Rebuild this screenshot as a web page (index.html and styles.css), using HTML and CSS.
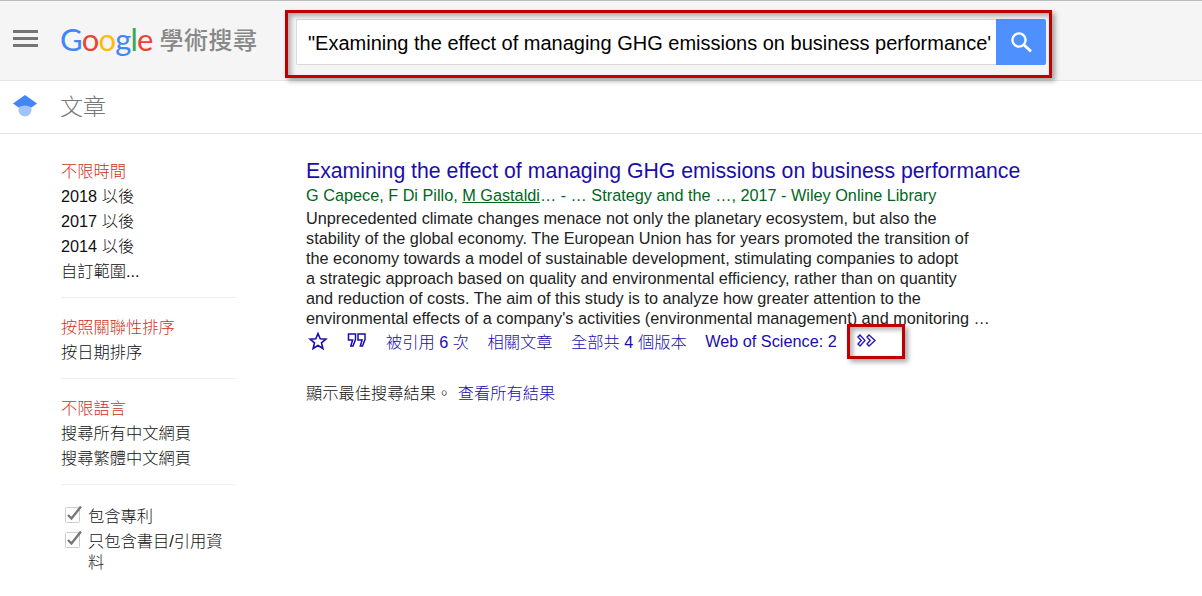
FILE: index.html
```html
<!DOCTYPE html>
<html lang="zh-Hant">

<head>
    <meta charset="UTF-8">
    <meta name="viewport" content="width=device-width, initial-scale=1.0">
    <title>Google 學術搜尋</title>
    <link rel="stylesheet" href="styles.css">
</head>

<body>
    <header class="top-bar">
        <div class="menu-icon"><span></span><span></span><span></span></div>
        <div class="logo">
            <span class="logo-google"><span class="g-blue">G</span><span class="g-red">o</span><span class="g-yellow">o</span><span class="g-blue">g</span><span class="g-green">l</span><span class="g-red">e</span></span>
            <span class="logo-text">學術搜尋</span>
        </div>
        <form class="search-form">
            <div class="search-input">"Examining the effect of managing GHG emissions on business performance'</div>
            <div class="search-button">
                <svg width="24" height="24" viewBox="0 0 24 24" fill="none" stroke="#fff">
                    <circle cx="10" cy="10" r="6.6" stroke-width="2.3"></circle>
                    <path d="M15 15l7 6.4" stroke-width="2.8"></path>
                </svg>
            </div>
        </form>
    </header>

    <div class="sub-bar">
        <svg class="cap-icon" width="26" height="24" viewBox="0 0 26 24">
            <circle cx="13" cy="16" r="6.5" fill="#a1c2fa"></circle>
            <path d="M13 1L25 9.5 19.5 13.5Q13 9.5 6.5 13.5L1 9.5Z" fill="#4285f4"></path>
        </svg>
        <span class="sub-title">文章</span>
    </div>

    <div class="content">
        <aside class="sidebar">
            <ul class="side-list">
                <li class="active">不限時間</li>
                <li>2018 以後</li>
                <li>2017 以後</li>
                <li>2014 以後</li>
                <li>自訂範圍...</li>
            </ul>
            <ul class="side-list">
                <li class="active">按照關聯性排序</li>
                <li>按日期排序</li>
            </ul>
            <ul class="side-list">
                <li class="active">不限語言</li>
                <li>搜尋所有中文網頁</li>
                <li>搜尋繁體中文網頁</li>
            </ul>
            <ul class="side-list checks">
                <li>
                    <svg class="check" width="19" height="20" viewBox="0 0 19 20">
                        <rect x="1.500" y="3.500" width="14" height="15" rx="1" fill="#fff" stroke="#ccc"></rect>
                        <path d="M4 11l3.500 3.500L17 2.500" fill="none" stroke="#777" stroke-width="2.400"></path>
                    </svg>
                    <span>包含專利</span>
                </li>
                <li>
                    <svg class="check" width="19" height="20" viewBox="0 0 19 20">
                        <rect x="1.500" y="3.500" width="14" height="15" rx="1" fill="#fff" stroke="#ccc"></rect>
                        <path d="M4 11l3.500 3.500L17 2.500" fill="none" stroke="#777" stroke-width="2.400"></path>
                    </svg>
                    <span>只包含書目/引用資料</span>
                </li>
            </ul>
        </aside>

        <main class="results">
            <h3 class="result-title"><a href="#">Examining the effect of managing GHG emissions on business performance</a></h3>
            <div class="result-meta">G Capece, F Di Pillo, <u>M Gastaldi</u>… - … Strategy and the …, 2017 - Wiley Online Library</div>
            <div class="result-snippet">Unprecedented climate changes menace not only the planetary ecosystem, but also the<br>stability of the global economy. The European Union has for years promoted the transition of<br>the economy towards a model of sustainable development, stimulating companies to adopt<br>a strategic approach based on quality and environmental efficiency, rather than on quantity<br>and reduction of costs. The aim of this study is to analyze how greater attention to the<br>environmental effects of a company's activities (environmental management) and monitoring …</div>
            <div class="result-links">
                <svg class="star" width="20" height="20" viewBox="0 0 20 20">
                    <path d="M10 2.500l2.200 5.300 5.700.4-4.400 3.700 1.400 5.600L10 14.500l-4.900 3 1.400-5.600-4.400-3.700 5.700-.4z" fill="none" stroke="#1a0dab" stroke-width="1.600"></path>
                </svg>
                <svg class="quote" width="20" height="20" viewBox="0 0 20 20">
                    <path d="M1.500 3h7v5.500L6 15H3.800l1.800-6H1.500zM11 3h7v5.500L15.500 15h-2.200l1.800-6H11z" fill="none" stroke="#1a0dab" stroke-width="1.500"></path>
                </svg>
                <a href="#">被引用 6 次</a>
                <a href="#">相關文章</a>
                <a href="#">全部共 4 個版本</a>
                <a href="#">Web of Science: 2</a>
                <svg class="more" width="20" height="14" viewBox="0 0 20 14">
                    <path d="M1 3L3 1 8 6.500 3 12 1 10 4.200 6.500ZM10 3L12 1 18 6.500 12 12 10 10 13.200 6.500Z" fill="none" stroke="#2a1db5" stroke-width="1.400"></path>
                </svg>
            </div>
            <p class="best-results">顯示最佳搜尋結果。 <a href="#">查看所有結果</a></p>
        </main>
    </div>

    <div class="mark mark-search"></div>
    <div class="mark mark-more"></div>
</body>

</html>
```

FILE: styles.css
```css
body {
    margin: 0;
    background-color: #fff;
    color: #222;
    font-family: 'Liberation Sans', Arial, 'Noto Sans CJK TC', sans-serif;
    font-size: 16.25px;
    font-weight: 300;
    position: relative;
    height: 596px;
    overflow: hidden;
}

a {
    color: #1a0dab;
    text-decoration: none;
}

/* top bar */
.top-bar {
    display: flex;
    align-items: center;
    box-sizing: border-box;
    height: 81px;
    background-color: #f5f5f5;
    border-top: 1px solid #bbb;
    border-bottom: 1px solid #e5e5e5;
}

.menu-icon {
    display: flex;
    flex-direction: column;
    gap: 4px;
    width: 25px;
    margin-left: 13px;
    margin-top: -4px;
}

.menu-icon span {
    display: block;
    height: 3px;
    background-color: #757575;
}

.logo {
    display: flex;
    align-items: center;
    margin-left: 22px;
    margin-top: -4px;
    width: 236px;
}

.logo-google {
    font-family: 'Lato', sans-serif;
    font-size: 31px;
    font-weight: 400;
    letter-spacing: -0.8px;
}

.g-blue { color: #4285f4; }
.g-red { color: #ea4335; }
.g-yellow { color: #fbbc05; }
.g-green { color: #34a853; }

.logo-text {
    margin-left: 7px;
    font-size: 24px;
    font-weight: 500;
    color: #888;
    letter-spacing: 0.5px;
}

.search-form {
    display: flex;
    height: 46px;
    width: 750px;
    margin-top: 3px;
}

.search-input {
    flex: 1;
    box-sizing: border-box;
    padding: 12px 0 0 11px;
    background-color: #fff;
    border: 1px solid #d9d9d9;
    border-right: 0;
    border-radius: 2px 0 0 2px;
    color: #000;
    font-size: 20px;
    font-weight: 400;
    white-space: nowrap;
}

.search-button {
    display: flex;
    align-items: center;
    justify-content: center;
    width: 50px;
    background-color: #4d90fe;
    border-radius: 0 2px 2px 0;
}

/* sub bar */
.sub-bar {
    display: flex;
    align-items: center;
    box-sizing: border-box;
    height: 53px;
    border-bottom: 1px solid #e5e5e5;
}

.cap-icon {
    margin-left: 12px;
    margin-top: -3px;
}

.sub-title {
    margin-left: 22px;
    margin-top: -4px;
    font-size: 23px;
    color: #777;
}

/* page */
.content {
    display: flex;
}

.sidebar {
    width: 175px;
    margin-left: 61px;
    padding-top: 25px;
    flex-shrink: 0;
}

.side-list {
    list-style: none;
    margin: 0 0 17px;
    padding: 0 0 13px;
    border-bottom: 1px solid #eee;
    line-height: 25px;
    color: #111;
}

.side-list .active {
    color: #cc3322;
}

.side-list.checks {
    border-bottom: 0;
    padding-top: 4px;
}

.checks li {
    display: flex;
    align-items: flex-start;
    line-height: 21px;
    margin-bottom: 4px;
}

.check {
    margin: -2px 5px 0 3px;
    flex-shrink: 0;
}

.results {
    margin-left: 70px;
    padding-top: 25px;
    width: 800px;
}

.result-title {
    margin: 0;
    font-size: 21.25px;
    font-weight: normal;
    line-height: 25px;
}

.result-meta {
    line-height: 22px;
    color: #006621;
}

.result-snippet {
    margin-top: 2px;
    line-height: 20px;
    white-space: nowrap;
}

.result-links {
    display: flex;
    align-items: center;
    height: 22px;
    margin-top: 2px;
}

.result-links a {
    margin-right: 18.5px;
}

.star {
    margin: 0 19px 0 2px;
}

.quote {
    margin-right: 19px;
}

.more {
    margin-top: -1px;
    margin-left: 2px;
}

.best-results {
    margin: 31px 0 0;
    line-height: 20px;
    color: #111;
}

.best-results a {
    margin-left: 1px;
}

/* red annotation boxes over the screenshot */
.mark {
    position: absolute;
    box-sizing: border-box;
    border: 3px solid #c00000;
    box-shadow: 3px 3px 5px rgba(0, 0, 0, 0.35), inset 3px 3px 5px rgba(0, 0, 0, 0.3);
}

.mark-search {
    left: 285px;
    top: 10px;
    width: 767px;
    height: 68px;
}

.mark-more {
    left: 847px;
    top: 324px;
    width: 58px;
    height: 35px;
}
```
